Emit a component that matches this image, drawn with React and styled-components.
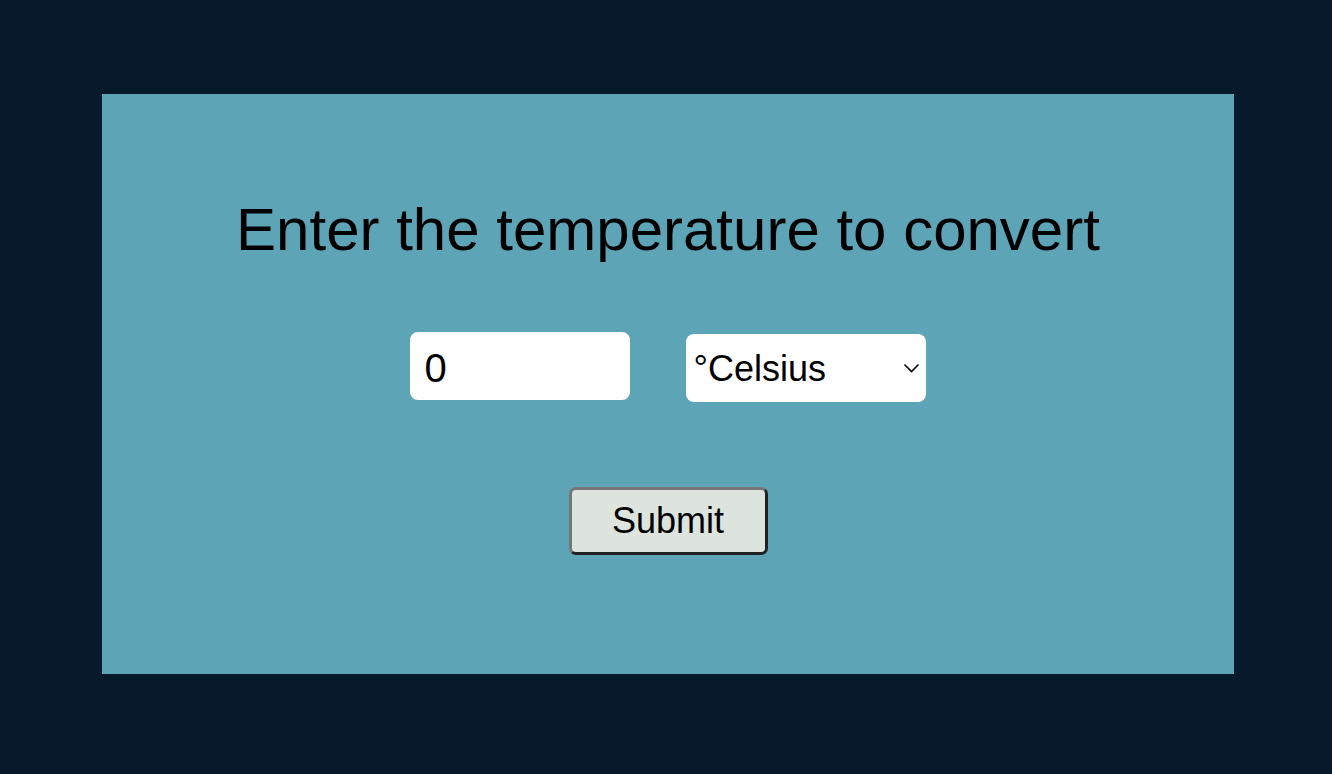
import React, { useState } from "react";
import styled, { createGlobalStyle } from "styled-components";

const GlobalStyle = createGlobalStyle`
  html, body {
    margin: 0;
    padding: 0;
    background: #071a2c;
    font-family: "Liberation Sans", Arial, Helvetica, sans-serif;
  }
`;

const Page = styled.div`
  min-height: 100vh;
  box-sizing: border-box;
  padding: 94px 98px 101px 102px;
  background: #071a2c;
`;

const Card = styled.form`
  height: 580px;
  box-sizing: border-box;
  background: #5ca4b6;
  padding-top: 101px;
  display: flex;
  flex-direction: column;
  align-items: center;
`;

const Title = styled.h1`
  margin: 0;
  font-size: 60px;
  line-height: 70px;
  font-weight: 400;
  color: #000;
`;

const Row = styled.div`
  display: flex;
  align-items: flex-start;
  gap: 56px;
  margin-top: 67px;
  margin-left: -1px;
`;

const NumberInput = styled.input`
  width: 220px;
  height: 68px;
  box-sizing: border-box;
  border: none;
  border-radius: 8px;
  padding: 4px 15px 0;
  font-family: inherit;
  font-size: 40px;
  color: #000;
  background: #fff;
  outline: none;
`;

const SelectWrap = styled.div`
  position: relative;
  margin-top: 2px;
`;

const UnitSelect = styled.select`
  appearance: none;
  -webkit-appearance: none;
  width: 240px;
  height: 68px;
  box-sizing: border-box;
  border: none;
  border-radius: 8px;
  padding: 0 36px 0 8px;
  font-family: inherit;
  font-size: 36px;
  color: #000;
  background: #fff;
  outline: none;
`;

const Chevron = styled.svg`
  position: absolute;
  right: 6px;
  top: 29px;
  pointer-events: none;
`;

const SubmitButton = styled.button`
  margin-top: 85px;
  width: 199px;
  height: 68px;
  box-sizing: border-box;
  background: #dce4dd;
  border: 3px solid;
  border-color: #767676 #222 #222 #767676;
  border-radius: 7px;
  font-family: inherit;
  font-size: 36px;
  color: #000;
  cursor: pointer;
`;

export default function App() {
  const [value, setValue] = useState("0");
  const [unit, setUnit] = useState("celsius");

  return (
    <>
      <GlobalStyle />
      <Page>
        <Card onSubmit={(e) => e.preventDefault()}>
          <Title>Enter the temperature to convert</Title>
          <Row>
            <NumberInput
              type="text"
              value={value}
              onChange={(e) => setValue(e.target.value)}
            />
            <SelectWrap>
              <UnitSelect value={unit} onChange={(e) => setUnit(e.target.value)}>
                <option value="celsius">°Celsius</option>
                <option value="fahrenheit">°Fahrenheit</option>
                <option value="kelvin">Kelvin</option>
              </UnitSelect>
              <Chevron width="17" height="10" viewBox="0 0 17 10">
                <path d="M1.5 1.5 L8.5 8.5 L15.5 1.5" fill="none" stroke="#000" strokeWidth="1.6" />
              </Chevron>
            </SelectWrap>
          </Row>
          <SubmitButton type="submit">Submit</SubmitButton>
        </Card>
      </Page>
    </>
  );
}
